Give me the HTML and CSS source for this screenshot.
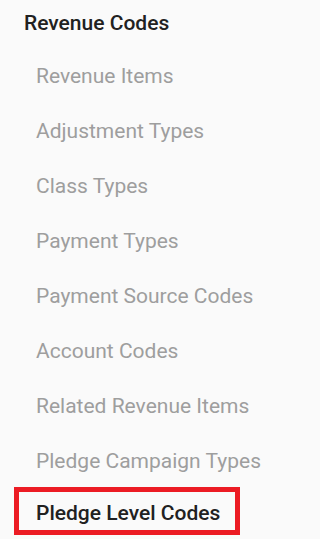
FILE: index.html
```html
<!DOCTYPE html>
<html lang="en">
<head>
<meta charset="utf-8">
<title>Revenue Codes</title>
<link rel="stylesheet" href="styles.css">
</head>
<body>
<nav class="sidenav">
  <div class="nav-header">Revenue Codes</div>
  <ul class="nav-list">
    <li class="nav-item">Revenue Items</li>
    <li class="nav-item">Adjustment Types</li>
    <li class="nav-item">Class Types</li>
    <li class="nav-item">Payment Types</li>
    <li class="nav-item">Payment Source Codes</li>
    <li class="nav-item">Account Codes</li>
    <li class="nav-item">Related Revenue Items</li>
    <li class="nav-item">Pledge Campaign Types</li>
    <li class="nav-item nav-item--active">Pledge Level Codes</li>
  </ul>
</nav>
</body>
</html>
```

FILE: styles.css
```css
html, body {
  margin: 0;
  padding: 0;
  background: #fafafa;
}

body {
  font-family: Roboto, "Noto Sans", "Liberation Sans", sans-serif;
  font-size: 21px;
  width: 284px;
  height: 539px;
  overflow: hidden;
}

.sidenav {
  display: flex;
  flex-direction: column;
}

.nav-header {
  padding-left: 24px;
  line-height: 47px;
  padding-bottom: 2px;
  font-weight: 500;
  color: #212121;
  white-space: nowrap;
}

.nav-list {
  list-style: none;
  margin: 0;
  padding: 0;
  display: flex;
  flex-direction: column;
}

.nav-item {
  padding-left: 36px;
  line-height: 55px;
  color: #9e9e9e;
  white-space: nowrap;
}

.nav-item--active {
  margin-top: -2px;
  margin-left: 14px;
  width: 216px;
  box-sizing: border-box;
  width: 226px;
  padding-left: 17px;
  padding-top: 4px;
  line-height: 34px;
  border: 5px solid #ec1c24;
  color: #212121;
  font-weight: 500;
}
```
